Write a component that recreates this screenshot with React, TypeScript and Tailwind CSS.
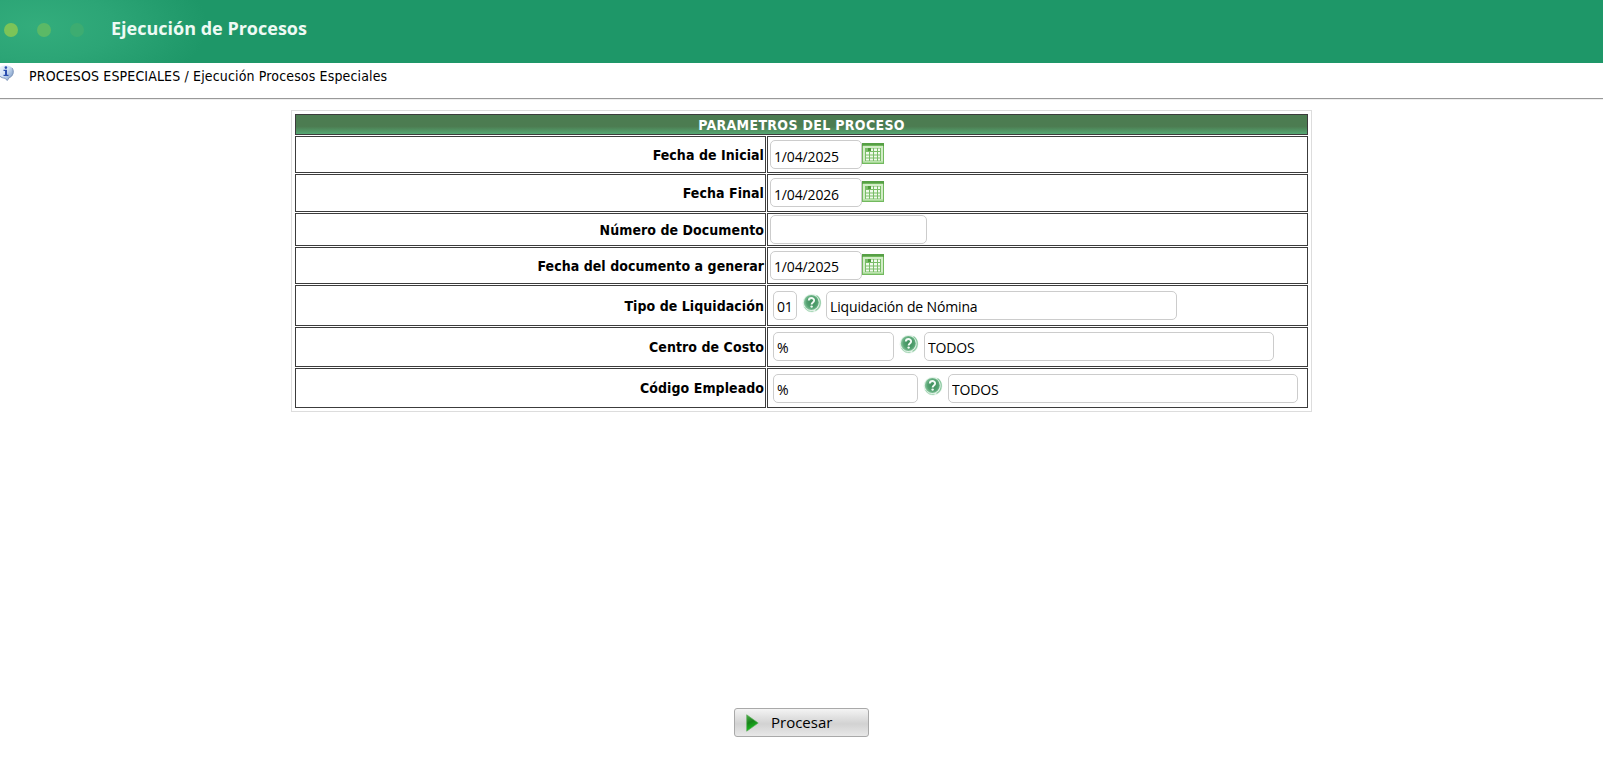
import { useState } from 'react';
import type { ReactNode } from 'react';

const LABEL_FONT = "font-['Tahoma','DejaVu_Sans_Condensed','DejaVu_Sans',sans-serif]";
const INPUT_FONT = "font-['Segoe_UI','Open_Sans','Noto_Sans',sans-serif]";

function CalendarIcon() {
  return (
    <svg width="22" height="21" viewBox="0 0 22 21" className="block shrink-0">
      <rect x="0.5" y="0.5" width="21" height="20" fill="#d3edc8" stroke="#72b95e" />
      <rect x="0" y="0" width="22" height="3" fill="#569f45" />
      <rect x="1" y="2" width="20" height="1" fill="#72b95e" />
      <rect x="1" y="18.5" width="20" height="1.5" fill="#a6d996" />
      <rect x="3" y="5" width="16" height="13" fill="#79bd67" />
      <g fill="#f1faec">
        <path d="M8 5.500h3V8H8zM12 5.500h3V8h-3zM16 5.500h2V8h-2z" />
        <path d="M4 9h3v2.500H4zM8 9h3v2.500H8zM12 9h3v2.500h-3zM16 9h2v2.500h-2z" />
        <path d="M4 12.500h3v2H4zM8 12.500h3v2H8zM12 12.500h3v2h-3zM16 12.500h2v2h-2z" />
        <path d="M4 15.500h3v2H4zM8 15.500h3v2H8zM12 15.500h3v2h-3zM16 15.500h2v2h-2z" />
      </g>
      <rect x="6" y="5" width="3" height="3" fill="#4f9b3b" />
    </svg>
  );
}

function HelpIcon() {
  return (
    <svg width="20" height="20" viewBox="0 0 20 20" className="block shrink-0">
      <defs>
        <radialGradient id="help-fill" cx="0.55" cy="0.5" r="0.6">
          <stop offset="0" stopColor="#3d8c5a" />
          <stop offset="0.6" stopColor="#53a271" />
          <stop offset="1" stopColor="#9bd2ad" />
        </radialGradient>
      </defs>
      <circle cx="10" cy="10.200" r="9.400" fill="#e4f3e9" />
      <path d="M14.500 2.500a8.800 8.800 0 0 1-1 15" fill="none" stroke="#8cc9a0" strokeWidth="1.200" />
      <path d="M2.500 14a8.500 8.500 0 0 0 9 4.300" fill="none" stroke="#a5d6b5" strokeWidth="1" />
      <circle cx="9.300" cy="9.400" r="7.500" fill="url(#help-fill)" />
      <path
        d="M6.800 7.500c.1-3.300 5.400-3.200 5.300-.1 0 2-2.500 2-2.500 4"
        fill="none"
        stroke="#f2faf5"
        strokeWidth="1.900"
      />
      <circle cx="9.600" cy="13.600" r="1.200" fill="#f2faf5" />
    </svg>
  );
}

function InfoIcon() {
  return (
    <svg width="14" height="16" viewBox="0 0 14 16" className="block shrink-0">
      <defs>
        <linearGradient id="info-fill" x1="0" y1="0" x2="1" y2="0.6">
          <stop offset="0" stopColor="#f7fafe" />
          <stop offset="0.6" stopColor="#cfe0f4" />
          <stop offset="1" stopColor="#86a4cd" />
        </linearGradient>
      </defs>
      <path
        d="M-3 6C-2 2 2 .5 6 .5c4.500 0 7.500 2.500 7.500 6.200 0 3.300-2 5.300-4 6L7.200 15.600 5 13.200C0 13-3 10-3 6z"
        fill="url(#info-fill)"
      />
      <path
        d="M12.300 3.200c1.800 3.300 1 7.700-3 9.400l-2.100 2.900L5 13.200c-2-.1-3.700-.8-5-1.900"
        fill="none"
        stroke="#8298ba"
        strokeWidth="1"
      />
      <path d="M3.500 4.700H7v5h1.500V11h-5V9.700H5V6H3.500z" fill="#2b4fae" />
      <circle cx="5.900" cy="2.600" r="1.300" fill="#2b4fae" />
    </svg>
  );
}

function Field({ initial = '', className }: { initial?: string; className: string }) {
  const [value, setValue] = useState(initial);

  return (
    <input
      type="text"
      value={value}
      onChange={(e) => setValue(e.target.value)}
      className={`${INPUT_FONT} block h-[29px] shrink-0 rounded-[5px] border border-[#ccc] bg-white pr-0 pl-[3px] text-[14px] tracking-[-0.15px] text-black outline-none ${className}`}
    />
  );
}

function DateField({ initial, className }: { initial: string; className: string }) {
  return (
    <div className="flex items-start pt-[3px] pl-0.5">
      <Field initial={initial} className={`w-[92px] ${className}`} />
      <div className="pt-[3px]">
        <CalendarIcon />
      </div>
    </div>
  );
}

interface LookupProps {
  code: string;
  name: string;
  codeClass: string;
  nameClass: string;
  gapClass: string;
}

function LookupField({ code, name, codeClass, nameClass, gapClass }: LookupProps) {
  return (
    <div className="flex items-start pl-[5px]">
      <Field initial={code} className={`pt-px ${codeClass}`} />
      <div className={`flex shrink-0 pt-0.5 ${gapClass}`}>
        <HelpIcon />
      </div>
      <Field initial={name} className={`pt-px ${nameClass}`} />
    </div>
  );
}

function Row({ label, className, children }: { label: string; className: string; children: ReactNode }) {
  return (
    <div className={`flex gap-px ${className}`}>
      <div
        className={`${LABEL_FONT} flex w-[471px] shrink-0 items-center justify-end border border-[#3c3c3c] pr-px text-[14px] leading-none font-bold tracking-[0.06px] text-black`}
      >
        {label}
      </div>
      <div className="flex-1 border border-[#3c3c3c]">{children}</div>
    </div>
  );
}

export default function App() {
  return (
    <div className="flex h-[760px] w-full flex-col overflow-hidden bg-white">
      <header className="flex h-[63px] shrink-0 items-start bg-[#1e9768] bg-[radial-gradient(ellipse_170px_75px_at_38px_26px,#33ad7c_0%,#2ca576_45%,#1e9768_100%)] pt-[22px] pl-1">
        <div className="flex items-center gap-[19px] pt-px">
          <span className="size-3.5 rounded-full bg-[#7cc458]" />
          <span className="size-3.5 rounded-full bg-[#5bb966]" />
          <span className="size-3.5 rounded-full bg-[#3dac71]" />
        </div>
        <h1 className="pl-[27px] font-['Open_Sans','Noto_Sans',sans-serif] text-[18px] leading-[13px] font-bold text-[#eefaf4]">
          Ejecución de Procesos
        </h1>
      </header>

      <nav className="flex h-[35px] shrink-0 items-start pt-0.5">
        <InfoIcon />
        <div className={`${LABEL_FONT} pt-[3px] pl-[15px] text-[14px] leading-4 tracking-[0.15px] text-black`}>
          PROCESOS ESPECIALES / Ejecución Procesos Especiales
        </div>
      </nav>
      <div className="h-0.5 shrink-0 border-t border-b border-t-[#999] border-b-[#eee]" />

      <main className="mt-2.5 ml-[291px] flex w-[1021px] shrink-0 flex-col gap-px border border-[#ddd] p-[3px]">
        <h2
          className={`${LABEL_FONT} flex h-[21px] items-center justify-center border border-[#3c3c3c] bg-linear-to-b from-[#4c7c51] from-60% to-[#55a873] text-[14px] leading-none font-bold tracking-[0.33px] text-white`}
        >
          PARAMETROS DEL PROCESO
        </h2>
        <Row label="Fecha de Inicial" className="h-[37px]">
          <DateField initial="1/04/2025" className="pt-[3px]" />
        </Row>
        <Row label="Fecha Final" className="h-[38px]">
          <DateField initial="1/04/2026" className="pt-[3px]" />
        </Row>
        <Row label="Número de Documento" className="h-[33px]">
          <div className="pt-px pl-0.5">
            <Field className="w-[157px]" />
          </div>
        </Row>
        <Row label="Fecha del documento a generar" className="h-[37px]">
          <DateField initial="1/04/2025" className="pt-px" />
        </Row>
        <Row label="Tipo de Liquidación" className="h-[41px]">
          <div className="pt-[5px]">
            <LookupField
              code="01"
              name="Liquidación de Nómina"
              codeClass="w-6"
              nameClass="w-[351px]"
              gapClass="w-[29px] pl-[5px]"
            />
          </div>
        </Row>
        <Row label="Centro de Costo" className="h-10">
          <div className="pt-1">
            <LookupField
              code="%"
              name="TODOS"
              codeClass="w-[121px]"
              nameClass="w-[350px]"
              gapClass="w-[30px] pl-[5px]"
            />
          </div>
        </Row>
        <Row label="Código Empleado" className="h-10">
          <div className="pt-[5px]">
            <LookupField
              code="%"
              name="TODOS"
              codeClass="w-[145px]"
              nameClass="w-[350px]"
              gapClass="w-[30px] pl-[5px]"
            />
          </div>
        </Row>
      </main>

      <div className="flex justify-center pt-[296px]">
        <button
          type="button"
          className={`${INPUT_FONT} flex h-[29px] w-[135px] items-center rounded-[3px] border border-[#a9a9a9] bg-linear-to-b from-[#f4f4f4] via-[#d2d2d2] via-55% to-[#e8e8e8] pl-[11px] text-[15px] text-black`}
        >
          <svg width="13" height="18" viewBox="0 0 13 18">
            <defs>
              <linearGradient id="play-fill" x1="0" y1="0" x2="0.3" y2="1">
                <stop offset="0" stopColor="#4fae4b" />
                <stop offset="0.5" stopColor="#17831a" />
                <stop offset="1" stopColor="#17c51c" />
              </linearGradient>
            </defs>
            <path d="M.7.800v16.400L12.200 9z" fill="url(#play-fill)" stroke="#5fae5c" strokeWidth="0.700" />
          </svg>
          <span className="pl-3">Procesar</span>
        </button>
      </div>
    </div>
  );
}
